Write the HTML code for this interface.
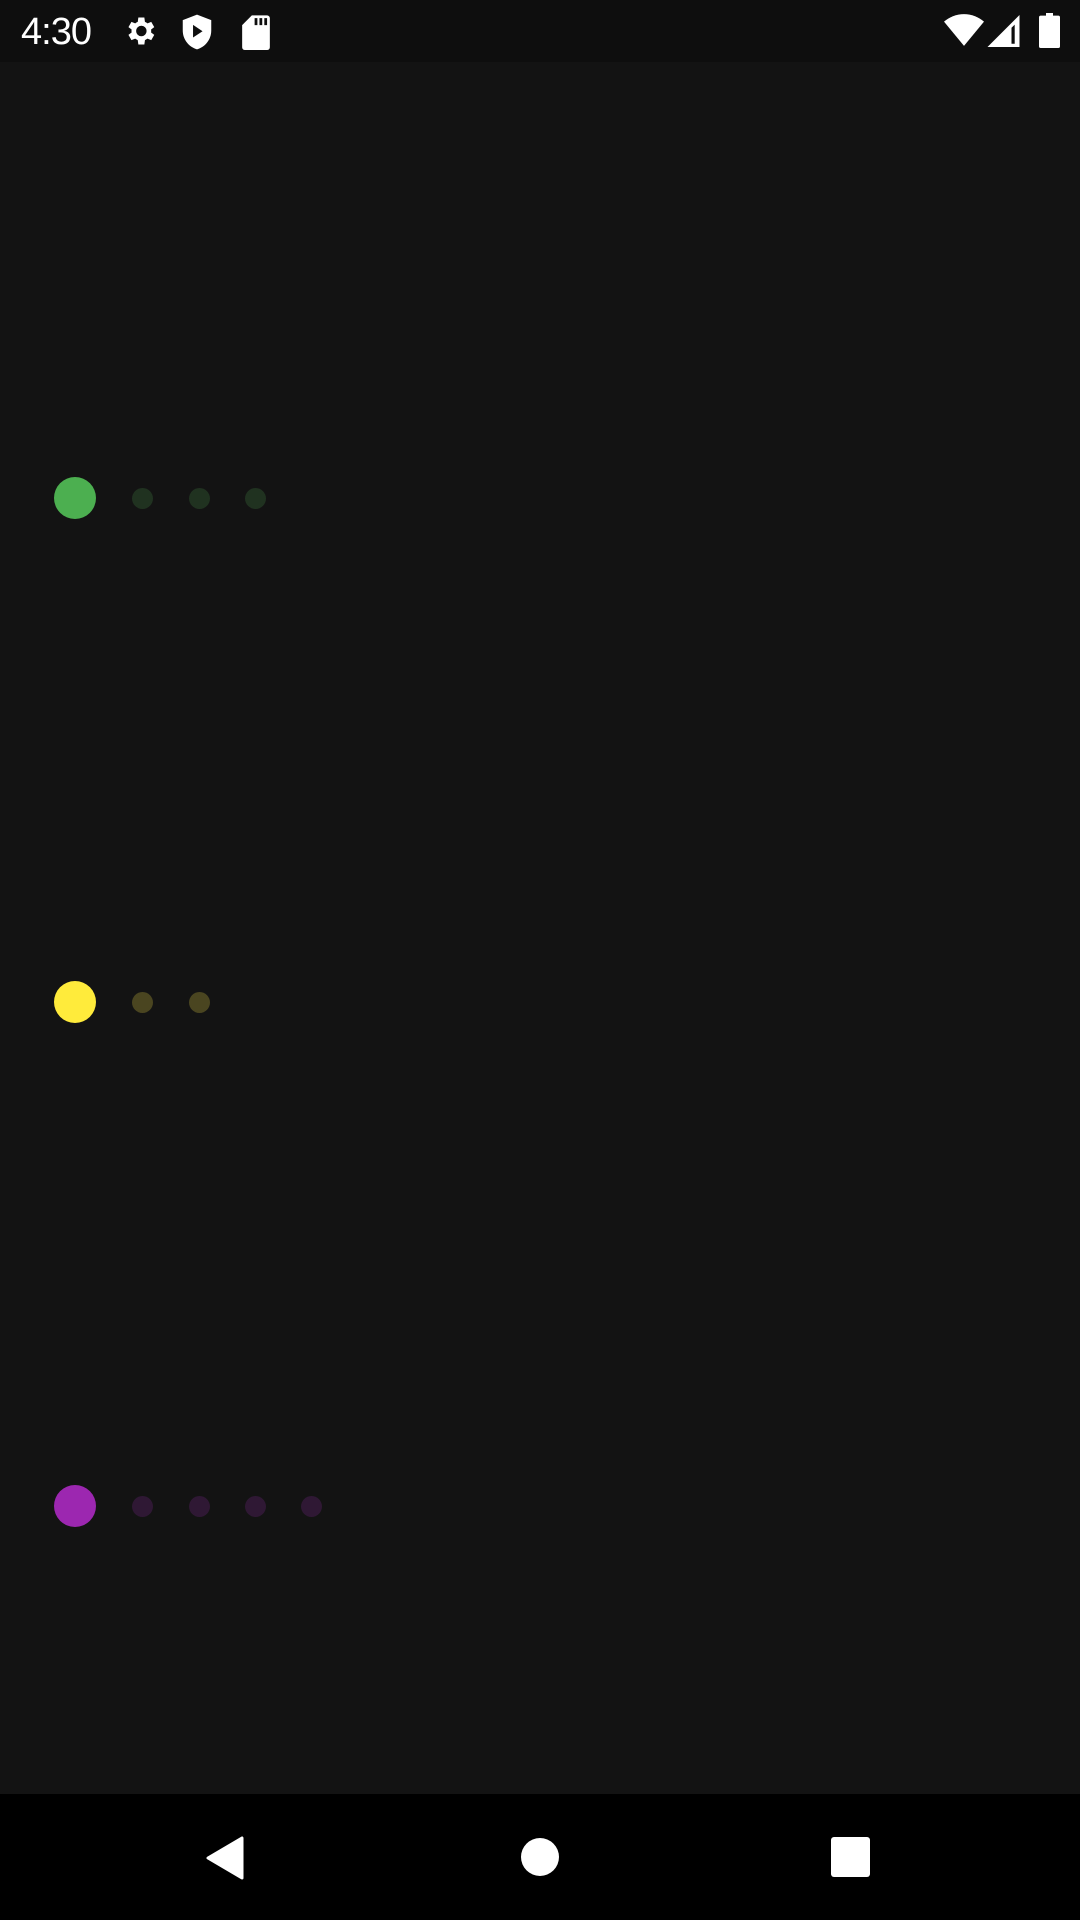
<!DOCTYPE html>
<html><head><meta charset="utf-8"><style>
html,body{margin:0;padding:0;width:1080px;height:1920px;background:#131313;overflow:hidden;font-family:"Liberation Sans",sans-serif}
.sb{position:absolute;left:0;top:0;width:1080px;height:62px;background:#0e0e0e}
.t{position:absolute;left:21px;top:11px;color:#fff;font-size:38px;letter-spacing:-1px}
.d{position:absolute;border-radius:50%}
.nav{position:absolute;left:0;top:1794px;width:1080px;height:126px;background:#000}
</style></head><body>
<div class="sb">
<div class="t">4:30</div>
<svg style="position:absolute;left:122px;top:13px" width="36" height="36" viewBox="0 0 24 24"><path fill="#fff" d="M19.4 13a7.5 7.5 0 000-2l2.1-1.6-2-3.5-2.5 1a7.3 7.3 0 00-1.7-1L14.9 3h-4l-.4 2.9a7.3 7.3 0 00-1.7 1l-2.5-1-2 3.5L6.4 11a7.5 7.5 0 000 2l-2.1 1.6 2 3.5 2.5-1c.5.4 1.1.7 1.7 1l.4 2.9h4l.4-2.9c.6-.3 1.2-.6 1.7-1l2.5 1 2-3.5zM12.9 15.5a3.5 3.5 0 110-7 3.5 3.5 0 010 7z"/></svg>
<svg style="position:absolute;left:180px;top:13px" width="34" height="38" viewBox="0 0 20 24"><path fill="#fff" d="M10 1L1 4.5v6.5c0 6 4 10.5 9 12 5-1.5 9-6 9-12V4.5z"/><path fill="#0e0e0e" d="M7.5 7.5v8l6-4z"/></svg>
<svg style="position:absolute;left:242px;top:14px" width="28" height="36" viewBox="0 0 20 26"><path fill="#fff" d="M7 1h11a2 2 0 012 2v21a2 2 0 01-2 2H2a2 2 0 01-2-2V8z"/><path fill="#0e0e0e" d="M9 3h2v5H9zM12.5 3h2v5h-2zM16 3h2v5h-2z"/></svg>
<svg style="position:absolute;left:944px;top:14px" width="40" height="32" viewBox="0 0 24 19"><path fill="#fff" d="M12 19L0 4.5C3.3 1.7 7.5 0 12 0s8.7 1.7 12 4.5z"/></svg>
<svg style="position:absolute;left:987px;top:15px" width="33" height="32" viewBox="0 0 20 20"><path fill="#fff" d="M20 0L0 20h20z"/><path fill="#0e0e0e" d="M17 6v12h-2V8z"/></svg>
<svg style="position:absolute;left:1039px;top:13px" width="21" height="35" viewBox="0 0 12 20"><path fill="#fff" d="M4 0h4v1.5h3a1 1 0 011 1V19a1 1 0 01-1 1H1a1 1 0 01-1-1V2.5a1 1 0 011-1h3z"/></svg>
</div>

<div class="d" style="left:54px;top:477px;width:42px;height:42px;background:#4caf50"></div>
<div class="d" style="left:132px;top:488px;width:21px;height:21px;background:#203220"></div>
<div class="d" style="left:189px;top:488px;width:21px;height:21px;background:#203220"></div>
<div class="d" style="left:245px;top:488px;width:21px;height:21px;background:#203220"></div>

<div class="d" style="left:54px;top:981px;width:42px;height:42px;background:#ffeb3b"></div>
<div class="d" style="left:132px;top:992px;width:21px;height:21px;background:#4a4520"></div>
<div class="d" style="left:189px;top:992px;width:21px;height:21px;background:#4a4520"></div>

<div class="d" style="left:54px;top:1485px;width:42px;height:42px;background:#9c27b0"></div>
<div class="d" style="left:132px;top:1496px;width:21px;height:21px;background:#2f1834"></div>
<div class="d" style="left:189px;top:1496px;width:21px;height:21px;background:#2f1834"></div>
<div class="d" style="left:245px;top:1496px;width:21px;height:21px;background:#2f1834"></div>
<div class="d" style="left:301px;top:1496px;width:21px;height:21px;background:#2f1834"></div>

<div class="nav">
<svg style="position:absolute;left:205px;top:42px" width="40" height="44" viewBox="0 0 40 44"><path fill="#fff" stroke="#fff" stroke-width="3" stroke-linejoin="round" d="M37 2V42L3 22z"/></svg>
<div class="d" style="left:521px;top:44px;width:38px;height:38px;background:#fff"></div>
<div style="position:absolute;left:831px;top:43px;width:39px;height:40px;background:#fff;border-radius:3px"></div>
</div>
</body></html>
